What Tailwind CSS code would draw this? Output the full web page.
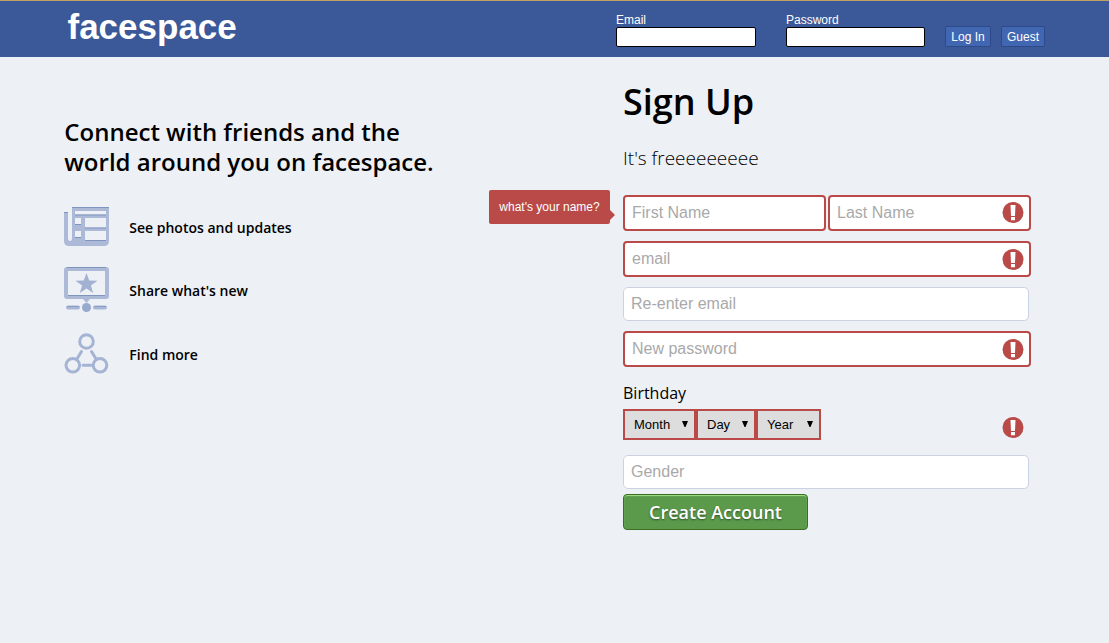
<!DOCTYPE html>
<html lang="en">
<head>
<meta charset="utf-8">
<title>facespace</title>
<script src="https://cdn.jsdelivr.net/npm/@tailwindcss/browser@4"></script>
</head>
<body class="h-[643px] overflow-hidden bg-[#edf0f5] font-['Open_Sans','Noto_Sans',sans-serif] text-black">
<svg class="hidden">
  <symbol id="alert" viewBox="0 0 22 21"><circle cx="11" cy="10.500" r="10.500" fill="#b94a48"/><path fill="#fff" d="M8.500 3h5l-.5 11H9zM9 15h4v3.200H9z"/></symbol>
</svg>
<header class="flex h-[57px] items-start border-t border-[#c0a062] bg-[#3b5998] pl-[67.5px] font-['Liberation_Sans',sans-serif] text-white">
  <h1 class="mt-[6px] w-[548.5px] text-[35px] leading-[40px] font-bold">facespace</h1>
  <form class="flex items-start pt-[12px] text-[12px] leading-[14px]">
    <label class="mr-[30px] block w-[140px]">Email<input class="block h-[20px] w-[140px] rounded-[2px] border border-black bg-white"></label>
    <label class="mr-[20px] block w-[139px]">Password<input class="block h-[20px] w-[139px] rounded-[2px] border border-black bg-white"></label>
    <button type="button" class="mt-[13px] mr-[10px] h-[21px] w-[46px] rounded-[1px] border border-[#2d4987] bg-[#4267b2] text-center">Log In</button>
    <button type="button" class="mt-[13px] h-[21px] w-[44px] rounded-[1px] border border-[#2d4987] bg-[#4267b2] text-center">Guest</button>
  </form>
</header>
<main class="flex">
  <section class="w-[489px] pt-[60px] pl-[64px]">
    <h2 class="pl-[0.3px] text-[24px] leading-[30px] font-semibold whitespace-nowrap">Connect with friends and the<br>world around you on facespace.</h2>
    <ul class="mt-[30px] text-[14px] leading-[20px] font-semibold">
      <li class="flex h-[40px] items-center gap-[20px]">
        <svg width="45" height="40" viewBox="0 0 45 40"><path fill="#adbad7" fill-rule="evenodd" d="M0 5h4v26q0 3 2 3t2-3V0h37v34q0 5-5 5H5q-5 0-5-5zM11 4v3.500h31V4zM11 11v6h6v-6zM21 11v9.500h21V11zM11 24v6h6v-6zM21 24v9h21v-9z"/><path stroke="#8094c0" d="M0 5.500h4M8 .5h37M11 8h31M11 17.500h6M21 21h21M11 30.500h6M21 33.500h21"/></svg>
        <span class="pt-[2px] pl-[0.300px]">See photos and updates</span></li>
      <li class="mt-[20px] flex h-[46px] items-center gap-[20px]">
        <svg width="45" height="46" viewBox="0 0 45 46"><path fill="#adbad7" fill-rule="evenodd" d="M3 0h39q3 0 3 3v26q0 3-3 3H26l-3.500 4L19 32H3q-3 0-3-3V3q0-3 3-3zM4 4v24h37V4z"/><path fill="#a2b1d2" d="M22.500 6l2.700 7.500 8.300.2-6.600 4.700 2.300 7.600-6.700-4.500-6.700 4.500 2.300-7.600-6.600-4.700 8.300-.2z"/><path stroke="#8094c0" d="M3 .5h39M4 28.500h37"/><path stroke="#a9b7d6" stroke-width="4" stroke-linecap="round" d="M4 40.500h10M31 40.500h10"/><path stroke="#8a9dc6" d="M3 39.500h12M30 39.500h12"/><circle cx="22.500" cy="40.500" r="4.500" fill="#98a9ce"/></svg>
        <span class="pt-[2px] pl-[0.300px]">Share what's new</span></li>
      <li class="mt-[20px] flex h-[42px] items-center gap-[20px]">
        <svg width="45" height="42" viewBox="0 0 45 42" fill="none" stroke="#a5b4d4" stroke-width="3"><circle cx="22.500" cy="8.500" r="6.800"/><circle cx="8.800" cy="32.300" r="6.800"/><circle cx="36" cy="32.300" r="6.800"/><path stroke-linecap="round" d="M17.500 18.500l-4 6.500M27.500 18.500l4 6.500M19 32.300h8"/></svg>
        <span class="pt-[2px] pl-[0.300px]">Find more</span></li>
    </ul>
  </section>
  <aside class="w-[134px] pt-[133px] font-['Liberation_Sans',sans-serif] text-[12px] text-white">
    <div class="relative h-[34px] w-[121px] rounded-[2px] bg-[#b94a48] text-center leading-[34px]">what's your name?<svg class="absolute top-[20px] left-[121px]" width="5" height="10"><path fill="#b94a48" d="M0 0l5 5-5 5z"/></svg></div>
  </aside>
  <form class="w-[408px] pt-[20px]">
    <h2 class="text-[36px] leading-[50px] font-semibold">Sign Up</h2>
    <p class="mt-[17px] text-[19px] leading-[28px] font-light">It's freeeeeeeee</p>
    <div class="mt-[23px] flex gap-[2px] font-['Liberation_Sans',sans-serif] text-[16px] text-[#a9a9a9]">
      <div class="flex h-[36px] w-[203px] items-center rounded-[4px] border-2 border-[#b94a48] bg-white px-[7px]">First Name</div>
      <div class="flex h-[36px] w-[203px] items-center justify-between rounded-[4px] border-2 border-[#b94a48] bg-white pr-[5px] pl-[7px]">Last Name<svg class="-mt-px" width="22" height="21"><use href="#alert"/></svg></div>
    </div>
    <div class="mt-[10px] flex flex-col gap-[10px] font-['Liberation_Sans',sans-serif] text-[16px] text-[#a9a9a9]">
      <div class="flex h-[36px] items-center justify-between rounded-[4px] border-2 border-[#b94a48] bg-white pr-[5px] pl-[7px]">email<svg class="mt-px" width="22" height="21"><use href="#alert"/></svg></div>
      <div class="flex h-[34px] w-[406px] items-center rounded-[5px] border border-[#cbd2e1] bg-white px-[7px]">Re-enter email</div>
      <div class="flex h-[36px] items-center justify-between rounded-[4px] border-2 border-[#b94a48] bg-white pr-[5px] pl-[7px]">New password<svg class="mt-px" width="22" height="21"><use href="#alert"/></svg></div>
    </div>
    <p class="mt-[14px] text-[16px] leading-[24px]">Birthday</p>
    <div class="mt-[4px] flex h-[31px] items-center justify-between pr-[7px]">
      <div class="flex font-['Liberation_Sans',sans-serif] text-[13px]">
        <div class="flex h-[31px] w-[73px] items-center justify-between border-2 border-[#b94a48] bg-[#ddd] pr-[6px] pl-[9px]">Month<svg class="-mt-[2px]" width="6" height="6"><path d="M0 0h6L3.500 6h-1z"/></svg></div>
        <div class="flex h-[31px] w-[60px] items-center justify-between border-2 border-[#b94a48] bg-[#ddd] pr-[6px] pl-[9px]">Day<svg class="-mt-[2px]" width="6" height="6"><path d="M0 0h6L3.500 6h-1z"/></svg></div>
        <div class="flex h-[31px] w-[65px] items-center justify-between border-2 border-[#b94a48] bg-[#ddd] pr-[6px] pl-[9px]">Year<svg class="-mt-[2px]" width="6" height="6"><path d="M0 0h6L3.500 6h-1z"/></svg></div>
      </div>
      <svg class="mt-[6px]" width="22" height="21"><use href="#alert"/></svg>
    </div>
    <div class="mt-[15px] flex h-[34px] w-[406px] items-center rounded-[5px] border border-[#cbd2e1] bg-white px-[7px] font-['Liberation_Sans',sans-serif] text-[16px] text-[#a9a9a9]">Gender</div>
    <button type="button" class="mt-[5px] block h-[36px] w-[185px] rounded-[4px] border border-[#3b6e22] bg-[#5b9a4b] text-center text-[18px] leading-[34px] font-semibold text-white shadow-[inset_0_1px_1px_#a4e388] text-shadow-[0_1px_2px_rgb(0_0_0_/_0.5)]">Create Account</button>
  </form>
</main>
</body>
</html>
